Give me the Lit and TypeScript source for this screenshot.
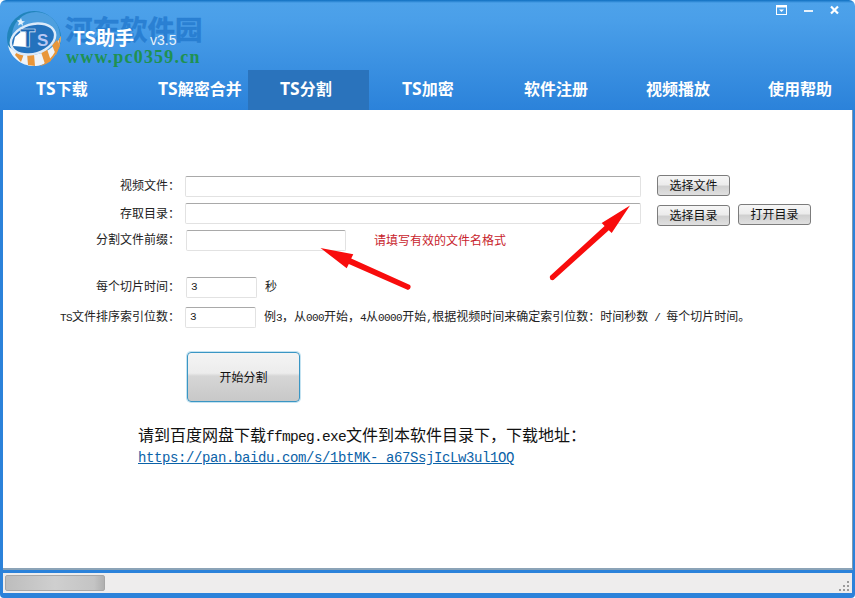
import { LitElement, html, css } from "lit";
import { customElement } from "lit/decorators.js";

@customElement("app-root")
export class AppRoot extends LitElement {
  static styles = css`
    :host {
      display: block;
      width: 855px;
      height: 598px;
      overflow: hidden;
      font-family: "Noto Sans CJK SC", "Liberation Mono", monospace;
      font-size: 12px;
      color: #222;
    }
    .lat { font-family: "Liberation Mono", monospace; font-size: 11px; letter-spacing: -.6px; }
    .win {
      position: relative;
      width: 855px;
      height: 598px;
      box-sizing: border-box;
      border-radius: 6px 6px 4px 4px;
      background: linear-gradient(#0f6fc0 0, #4da2ea 3px, #4a9fe9 20px, #2b82da 110px, #2b82da 100%);
      display: flex;
      flex-direction: column;
    }
    .head {
      height: 70px;
      display: flex;
      flex-direction: column;
      flex: none;
    }
    .sys {
      display: flex;
      justify-content: flex-end;
      align-items: center;
      gap: 17px;
      height: 10px;
      padding: 5px 16px 0 0;
    }
    .sys svg { display: block; }
    .title {
      position: relative;
      z-index: 1;
      display: flex;
      align-items: baseline;
      padding: 9px 0 0 73px;
      color: #fff;
      font-family: "Noto Sans CJK SC", "Noto Sans", sans-serif;
    }
    .title b { font-size: 19px; font-weight: 700; line-height: 26px; width: 77px; }
    .title span { font-size: 14px; font-family: "Liberation Sans", sans-serif; color: #e8f2fb; }
    .logo { position: absolute; left: 0; top: 5px; }
    .wm1 {
      position: absolute; left: 65px; top: 10px;
      font: 700 27.5px/36px "Noto Sans CJK SC", serif;
      -webkit-text-stroke: .5px rgba(38, 124, 208, .85);
      color: rgba(38, 124, 208, .88);
    }
    .wm2 {
      position: absolute; left: 66px; top: 47px;
      font: 700 18px/20px "Liberation Serif", serif;
      color: #1f9152;
      letter-spacing: 1.2px;
    }
    .tabs {
      height: 40px;
      flex: none;
      display: flex;
      padding-left: 4px;
    }
    .tab {
      flex: none;
      width: 122px;
      box-sizing: border-box;
      padding-left: 32px;
      color: #fff;
      white-space: nowrap;
      font: 700 16px/37px "Noto Sans CJK SC", "Noto Sans", sans-serif;
    }
    .tab .t { font-family: "Noto Sans", sans-serif; font-size: 17.5px; }
    .tab.on { background: #2a73bc; width: 121px; margin-right: 1px; }
    .body {
      flex: none;
      height: 460px;
      margin: 0 2px 0 3px;
      background: #fff;
      border-right: 1px solid #7d9ab3;
      border-bottom: 2px solid #8ba3b7;
      box-sizing: border-box;
      padding-top: 66px;
      display: flex;
      flex-direction: column;
    }
    .row { display: flex; align-items: flex-start; height: 21px; }
    .label {
      width: 177px;
      flex: none;
      text-align: right;
      line-height: 18px;
      font-size: 12px;
    }
    .input {
      box-sizing: border-box;
      height: 21px;
      margin-left: 5px;
      background: #fff;
      border: 1px solid #e2e2e2;
      border-top-color: #a9a9a9;
      border-radius: 2px;
      flex: none;
      padding-left: 4px;
      line-height: 18px;
    }
    .wide { width: 456px; }
    .mid { width: 160px; margin-left: 6px; }
    .short { width: 71px; }
    .short.s { margin-left: 6px; }
    .btn {
      box-sizing: border-box;
      width: 73px;
      height: 21px;
      border: 1px solid #7c7c7c;
      border-radius: 3px;
      background: linear-gradient(#f6f6f6, #ececec 45%, #d0d0d0 55%, #e0e0e0);
      text-align: center;
      line-height: 18px;
      color: #111;
      flex: none;
    }
    .b1 { margin: -1px 0 0 16px; }
    .b2 { margin: 2px 0 0 16px; }
    .b3 { margin: 1px 0 0 8px; }
    .r2 { margin-top: 6px; }
    .r2 .label { line-height: 20px; }
    .r3 { margin-top: 6px; }
    .r4 { margin-top: 26px; }
    .r5 { margin-top: 9px; }
    .err { margin-left: 28px; color: #c8232c; line-height: 19px; }
    .note { margin-left: 8px; line-height: 18px; white-space: nowrap; }
    .start {
      box-sizing: border-box;
      width: 113px;
      height: 50px;
      margin: 24px 0 0 184px;
      border: 1px solid #3a96c4;
      border-radius: 4px;
      background: linear-gradient(#f4f4f4, #ececec 42%, #d6d6d6 48%, #c8c8c8);
      text-align: center;
      line-height: 48px;
      color: #111;
      box-shadow: 0 0 0 1px rgba(90, 175, 215, .35);
    }
    .dl { margin: 22px 0 0 135px; font-size: 16px; line-height: 21px; white-space: nowrap; color: #111; }
    .dl .m { font-family: "Liberation Mono", monospace; font-size: 14.5px; letter-spacing: -.7px; }
    .dl a {
      display: block;
      margin-top: 2px;
      font-family: "Liberation Mono", monospace;
      font-size: 14px;
      letter-spacing: -.4px;
      line-height: 17px;
      color: #0b62a8;
      text-decoration: underline;
    }
    .status {
      margin: 3px 3px 0;
      height: 20px;
      flex: none;
      background: #eeeded;
      position: relative;
      display: flex;
      align-items: center;
      padding-left: 2px;
    }
    .thumb {
      width: 100px;
      height: 16px;
      box-sizing: border-box;
      border: 1px solid #a7a7a7;
      border-radius: 2px;
      background: linear-gradient(90deg, #bdbdbd, #cfcfcf 50%, #c4c4c4 90%, #b0b0b0);
    }
    .grip { position: absolute; right: 1px; bottom: 1px; }
    .arrows { position: absolute; left: 0; top: 0; pointer-events: none; }
  `;

  render() {
    const tabs = [["TS", "下载"], ["TS", "解密合并"], ["TS", "分割"], ["TS", "加密"], ["", "软件注册"], ["", "视频播放"], ["", "使用帮助"]];
    return html`
      <div class="win">
        <div class="head">
          <div class="sys">
            <svg width="11" height="10" viewBox="0 0 11 10"><rect x=".5" y=".5" width="10" height="9" fill="none" stroke="#fff"/><rect x="1" y="1" width="9" height="1.5" fill="#fff"/><path d="M3 4.500h5L5.500 7z" fill="#fff"/></svg>
            <svg width="9" height="10" viewBox="0 0 9 10"><rect x="0" y="5" width="9" height="2" fill="#e6f1fb"/></svg>
            <svg width="9" height="10" viewBox="0 0 9 10"><path d="M1 1.500l7 7M8 1.500l-7 7" stroke="#fff" stroke-width="2.2"/></svg>
          </div>
          <div class="title"><b>TS助手</b><span>v3.5</span></div>
        </div>
        <svg class="logo" width="80" height="70" viewBox="0 0 80 70">
          <circle cx="34" cy="33" r="27" fill="#2184bb"/>
          <circle cx="36" cy="31" r="24" fill="#4d9fdf"/>
          <path d="M8 40C10 52 22 62 36 61 50 60 60 48 61 31 56 42 44 50 30 50 20 50 12 46 8 40z" fill="#eef3f8"/>
          <path d="M15 50l4-7 6 3-4 11zM27 48l7 1 1 12-7-1zM41 47l6-3 4 12-6 3zM52 40l5-5 3 6-4 9z" fill="#e8963a"/>
          <path d="M40 61C50 60 60 48 61 31l-2 3C58 46 50 56 40 61z" fill="#e8963a"/>
          <ellipse cx="33" cy="34" rx="24" ry="16" fill="#dbeafa" transform="rotate(-17 33 34)"/>
          <ellipse cx="33" cy="34" rx="21.500" ry="13.500" fill="#2472bd" transform="rotate(-17 33 34)"/>
          <path d="M13 41l2-9 8-7 3 3v14z" fill="#fff"/>
          <text x="20" y="42" font-family="Liberation Sans" font-weight="700" font-size="25" fill="#1b64b0" stroke="#e6f2fc" stroke-width=".6">T</text>
          <text x="37" y="41" font-family="Liberation Sans" font-weight="700" font-size="17" fill="#b9c8f4">S</text>
          <path d="M21 13l1 3 3 .5-2.500 1.500.5 3-2-2-3 1.500 1-3-2-2 3-.5z" fill="#e4f2fc"/>
        </svg>
        <div class="wm1">河东软件园</div>
        <div class="wm2">www.pc0359.cn</div>
        <div class="tabs">
          ${tabs.map((t, i) => html`<div class="tab ${i === 2 ? "on" : ""}"><span class="t">${t[0]}</span>${t[1]}</div>`)}
        </div>
        <div class="body">
          <div class="row">
            <div class="label">视频文件：</div>
            <div class="input wide"></div>
            <div class="btn b1">选择文件</div>
          </div>
          <div class="row r2">
            <div class="label">存取目录：</div>
            <div class="input wide"></div>
            <div class="btn b2">选择目录</div>
            <div class="btn b3">打开目录</div>
          </div>
          <div class="row r3">
            <div class="label">分割文件前缀：</div>
            <div class="input mid"></div>
            <div class="err">请填写有效的文件名格式</div>
          </div>
          <div class="row r4">
            <div class="label">每个切片时间：</div>
            <div class="input short s lat">3</div>
            <div class="note">秒</div>
          </div>
          <div class="row r5">
            <div class="label"><span class="lat">TS</span>文件排序索引位数：</div>
            <div class="input short lat">3</div>
            <div class="note">例<span class="lat">3</span>，从<span class="lat">000</span>开始，<span class="lat">4</span>从<span class="lat">0000</span>开始<span class="lat">,</span>根据视频时间来确定索引位数：时间秒数<span class="lat"> / </span>每个切片时间。</div>
          </div>
          <div class="start">开始分割</div>
          <div class="dl">请到百度网盘下载<span class="m">ffmpeg.exe</span>文件到本软件目录下，下载地址：<a>https://pan.baidu.com/s/1btMK- a67SsjIcLw3ul1OQ</a></div>
        </div>
        <div class="status">
          <div class="thumb"></div>
          <svg class="grip" width="12" height="12" viewBox="0 0 12 12" fill="#9a9a9a"><rect x="8" y="1" width="2" height="2"/><rect x="4" y="5" width="2" height="2"/><rect x="8" y="5" width="2" height="2"/><rect x="0" y="9" width="2" height="2"/><rect x="4" y="9" width="2" height="2"/><rect x="8" y="9" width="2" height="2"/></svg>
        </div>
        <svg class="arrows" width="855" height="598" viewBox="0 0 855 598" fill="#f80c0c">
          <path d="M550 276L604.600 226 601.700 223 630 205.500 611.700 233 608.800 230.200 553.500 280Q549 281 550 276z"/>
          <path d="M320.500 248L353.300 254.300 351.200 258.600 410 285Q412 288 408 290L348.800 264 346.700 268.300z"/>
        </svg>
      </div>
    `;
  }
}
